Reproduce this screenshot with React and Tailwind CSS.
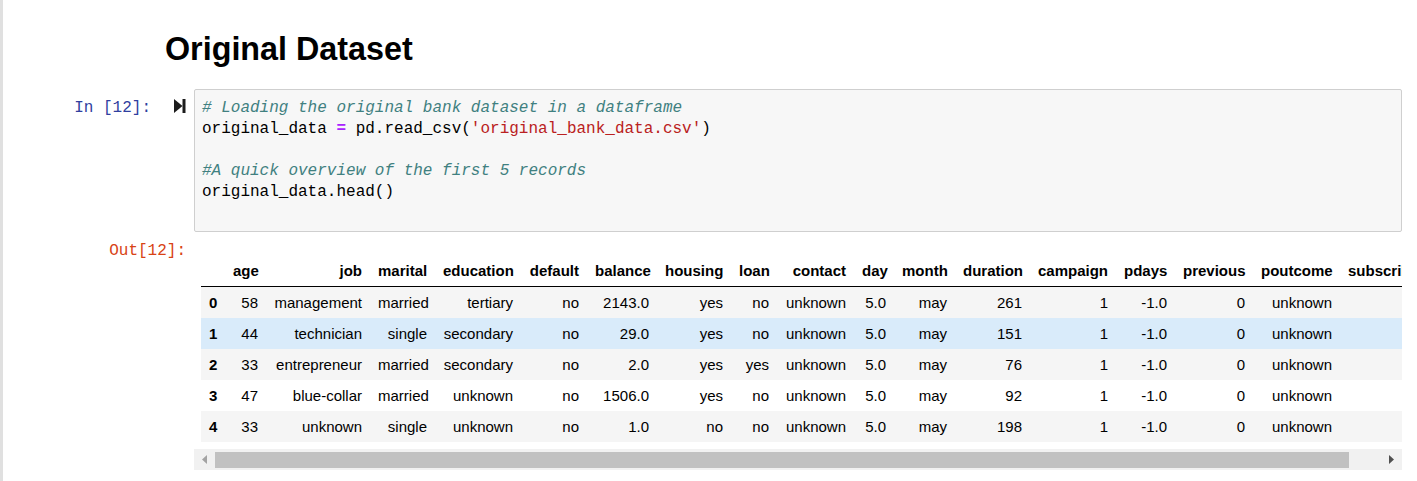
import React from "react";

const columns = [
  { name: "", w: "w-[24px]" },
  { name: "age", w: "w-[41px]" },
  { name: "job", w: "w-[104px]" },
  { name: "marital", w: "w-[65px]" },
  { name: "education", w: "w-[86px]" },
  { name: "default", w: "w-[66px]" },
  { name: "balance", w: "w-[70px]" },
  { name: "housing", w: "w-[74px]" },
  { name: "loan", w: "w-[46px]" },
  { name: "contact", w: "w-[77px]" },
  { name: "day", w: "w-[40px]" },
  { name: "month", w: "w-[61px]" },
  { name: "duration", w: "w-[75px]" },
  { name: "campaign", w: "w-[86px]" },
  { name: "pdays", w: "w-[59px]" },
  { name: "previous", w: "w-[78px]" },
  { name: "poutcome", w: "w-[87px]" },
  { name: "subscribed", w: "w-[96px]" },
];

const rows = [
  ["58", "management", "married", "tertiary", "no", "2143.0", "yes", "no", "unknown", "5.0", "may", "261", "1", "-1.0", "0", "unknown", "no"],
  ["44", "technician", "single", "secondary", "no", "29.0", "yes", "no", "unknown", "5.0", "may", "151", "1", "-1.0", "0", "unknown", "no"],
  ["33", "entrepreneur", "married", "secondary", "no", "2.0", "yes", "yes", "unknown", "5.0", "may", "76", "1", "-1.0", "0", "unknown", "no"],
  ["47", "blue-collar", "married", "unknown", "no", "1506.0", "yes", "no", "unknown", "5.0", "may", "92", "1", "-1.0", "0", "unknown", "no"],
  ["33", "unknown", "single", "unknown", "no", "1.0", "no", "no", "unknown", "5.0", "may", "198", "1", "-1.0", "0", "unknown", "no"],
];

const rowBg = ["bg-[#f5f5f5]", "bg-[#d9ebfa]", "bg-[#f5f5f5]", "bg-white", "bg-[#f5f5f5]"];

const mono = "font-['Liberation_Mono',monospace] text-[16px] leading-[21px]";

function RunIcon() {
  return (
    <svg width="12" height="14" viewBox="0 0 12 14" className="shrink-0">
      <path d="M0 0 L8.5 7 L0 14 Z" fill="#1c1c1c" />
      <rect x="8.5" y="0" width="3" height="14" fill="#1c1c1c" />
    </svg>
  );
}

export default function App() {
  return (
    <div className="min-h-screen bg-white flex font-['Liberation_Sans',Arial,sans-serif] text-black">
      <div className="w-[3px] bg-[#e0e0e0] shrink-0" />

      <div className="flex-1 pr-[15px] min-w-0">
        {/* Markdown heading */}
        <h1 className="pl-[162px] pt-[31px] text-[32.3px] leading-[36px] font-bold">Original Dataset</h1>

        {/* Input cell */}
        <div className="flex mt-[22px]">
          <div className="w-[191px] shrink-0 flex justify-end items-start pt-[9px] pr-[8px]">
            <span className={`${mono} text-[#303F9F]`}>In&nbsp;[12]:</span>
            <div className="ml-[23px] mt-[1px]">
              <RunIcon />
            </div>
          </div>
          <div className={`flex-1 h-[143px] border border-[#cfcfcf] bg-[#f7f7f7] rounded-[2px] pl-[7px] pt-[8px] ${mono} whitespace-pre`}>
            <div className="italic text-[#408080]"># Loading the original bank dataset in a dataframe</div>
            <div>
              original_data <span className="text-[#AA22FF] font-bold">=</span> pd.read_csv(<span className="text-[#BA2121]">'original_bank_data.csv'</span>)
            </div>
            <div>&nbsp;</div>
            <div className="italic text-[#408080]">#A quick overview of the first 5 records</div>
            <div>original_data.head()</div>
          </div>
        </div>

        {/* Output cell */}
        <div className="flex mt-[8px]">
          <div className="w-[191px] shrink-0 flex justify-end pr-[8px] pt-[1px]">
            <span className={`${mono} text-[#D84315]`}>Out[12]:</span>
          </div>
          <div className="flex-1 min-w-0 pt-[16px]">
            <div className="overflow-hidden pl-[7px]">
              <table className="table-fixed border-separate border-spacing-0 w-[1235px] text-[15px]">
                <thead>
                  <tr>
                    {columns.map((c, i) => (
                      <th key={i} className={`${c.w} h-[31px] px-[8px] text-right font-bold whitespace-nowrap border-b border-black`}>
                        {c.name}
                      </th>
                    ))}
                  </tr>
                </thead>
                <tbody>
                  {rows.map((r, i) => (
                    <tr key={i} className={rowBg[i]}>
                      <th className="h-[31px] px-[8px] pt-[2px] pb-0 text-right font-bold">{i}</th>
                      {r.map((v, j) => (
                        <td key={j} className="h-[31px] px-[8px] pt-[2px] pb-0 text-right whitespace-nowrap">
                          {v}
                        </td>
                      ))}
                    </tr>
                  ))}
                </tbody>
              </table>
            </div>

            {/* Horizontal scrollbar */}
            <div className="mt-[7px] h-[21px] bg-[#f1f1f1] flex items-center">
              <div className="w-[21px] flex justify-center">
                <svg width="5" height="9" viewBox="0 0 5 9">
                  <path d="M5 0 L0 4.5 L5 9 Z" fill="#a3a3a3" />
                </svg>
              </div>
              <div className="w-[1134px] h-[16px] bg-[#c1c1c1]" />
              <div className="flex-1 flex justify-end pr-[8px]">
                <svg width="5" height="9" viewBox="0 0 5 9">
                  <path d="M0 0 L5 4.5 L0 9 Z" fill="#505050" />
                </svg>
              </div>
            </div>
          </div>
        </div>
      </div>
    </div>
  );
}
